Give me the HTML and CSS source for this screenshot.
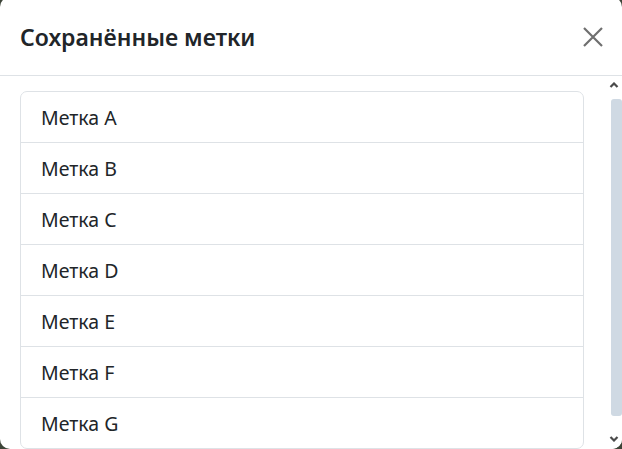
FILE: index.html
```html
<!DOCTYPE html>
<html lang="ru">
<head>
<meta charset="utf-8">
<title>Сохранённые метки</title>
<link rel="stylesheet" href="styles.css">
</head>
<body>
<div class="modal">
  <div class="modal-header">
    <h5 class="modal-title">Сохранённые метки</h5>
    <button class="btn-close" type="button" aria-label="Закрыть">
      <svg width="20" height="20" viewBox="0 0 20 20" aria-hidden="true">
        <path d="M1 1 L19 19 M19 1 L1 19" stroke="#6f6f6f" stroke-width="2.2" fill="none"/>
      </svg>
    </button>
  </div>
  <div class="modal-main">
    <div class="modal-body">
      <ul class="list-group">
        <li class="list-item">Метка A</li>
        <li class="list-item">Метка B</li>
        <li class="list-item">Метка C</li>
        <li class="list-item">Метка D</li>
        <li class="list-item">Метка E</li>
        <li class="list-item">Метка F</li>
        <li class="list-item">Метка G</li>
      </ul>
    </div>
    <div class="scrollbar" aria-hidden="true">
      <div class="sb-button">
        <svg width="10" height="6" viewBox="0 0 10 6"><path d="M1.5 5 L5 1.5 L8.5 5" stroke="#4a4a4a" stroke-width="2.2" fill="none"/></svg>
      </div>
      <div class="sb-track">
        <div class="sb-thumb"></div>
      </div>
      <div class="sb-button sb-button-down">
        <svg width="10" height="6" viewBox="0 0 10 6"><path d="M1.5 1 L5 4.5 L8.5 1" stroke="#4a4a4a" stroke-width="2.2" fill="none"/></svg>
      </div>
    </div>
  </div>
</div>
</body>
</html>
```
FILE: styles.css
```css
html, body {
  margin: 0;
  padding: 0;
  height: 100%;
}
body {
  background: #3d4438;
  overflow: hidden;
  font-family: "Noto Sans", "Open Sans", sans-serif;
  color: #212529;
}
.modal {
  margin-top: -3px;
  height: 452px;
  display: flex;
  flex-direction: column;
  background: #fff;
  border-radius: 10px;
  overflow: hidden;
}
.modal-header {
  display: flex;
  align-items: center;
  justify-content: space-between;
  padding: 21px 18px 19px 20px;
  border-bottom: 1px solid #dee2e6;
  flex: none;
}
.modal-title {
  margin: 0;
  font-size: 23px;
  font-weight: 600;
  line-height: 38px;
  color: #212529;
}
.btn-close {
  width: 22px;
  height: 22px;
  padding: 0;
  border: 0;
  background: transparent;
  display: flex;
  align-items: center;
  justify-content: center;
  cursor: pointer;
}
.modal-main {
  flex: 1;
  min-height: 0;
  display: flex;
}
.modal-body {
  flex: 1;
  min-width: 0;
  overflow: hidden;
  padding: 15px 20px 16px 20px;
}
.list-group {
  list-style: none;
  margin: 0;
  padding: 0;
  border: 1px solid #dee2e6;
  border-radius: 7px;
}
.list-item {
  padding: 13px 20px 11px;
  font-size: 19.5px;
  line-height: 26px;
  border-bottom: 1px solid #dee2e6;
}
.list-item:last-child {
  border-bottom: 0;
}
.scrollbar {
  width: 18px;
  flex: none;
  display: flex;
  flex-direction: column;
  background: #fff;
}
.sb-button {
  height: 16px;
  flex: none;
  display: flex;
  align-items: center;
  justify-content: center;
  padding-left: 2px;
  padding-top: 1px;
}
.sb-button-down {
  align-items: flex-start;
  padding-top: 4px;
  height: 13px;
}
.sb-track {
  flex: 1;
  padding: 6px 0 16px 7px;
  display: flex;
}
.sb-thumb {
  width: 6px;
  flex: 1;
  background: #cfd9e3;
  border-radius: 3px;
}
```
